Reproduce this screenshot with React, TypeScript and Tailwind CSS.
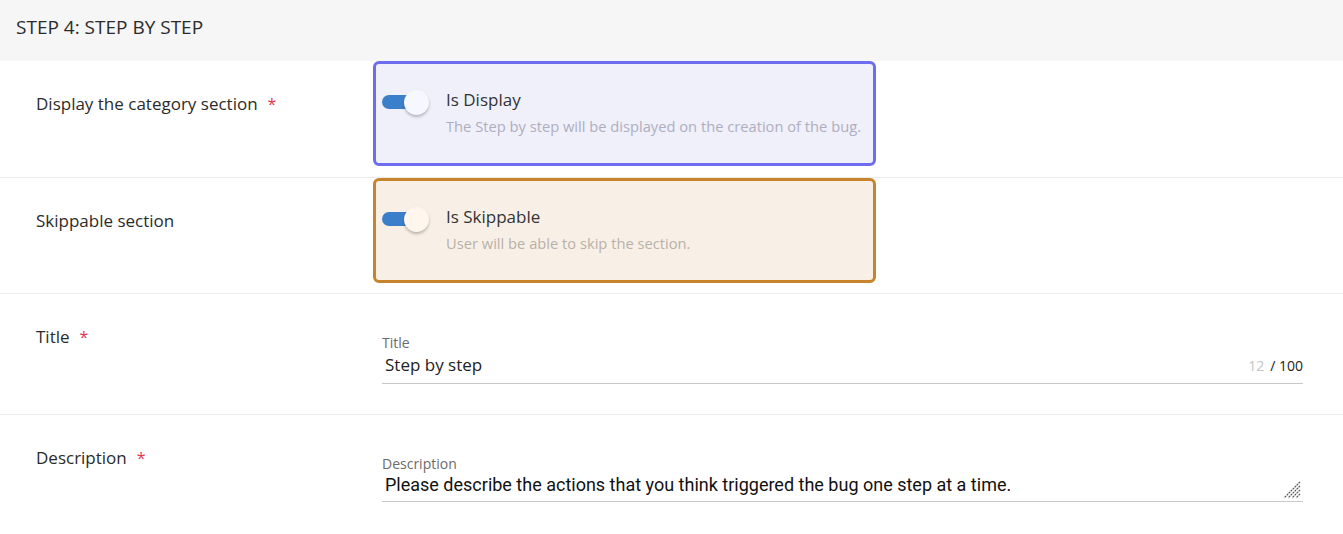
import React from "react";

const font = { fontFamily: '"Open Sans", "Noto Sans", sans-serif' };

const Required = () => <span className="ml-[10px] text-[16px] text-[#e2374f]">*</span>;

const Row = ({
  label,
  required,
  children,
  className = "",
}: {
  label: string;
  required?: boolean;
  children: React.ReactNode;
  className?: string;
}) => (
  <div className={`flex border-b border-[#ececec] ${className}`}>
    <div className="w-[373px] shrink-0 pl-9 pt-[32px] text-[17px] leading-[22px] text-[#2b2b2b]">
      {label}
      {required && <Required />}
    </div>
    <div className="flex-1 pr-10">{children}</div>
  </div>
);

// switch card with coloured border
const ToggleCard = ({
  title,
  hint,
  border,
  bg,
  hintColor,
}: {
  title: string;
  hint: string;
  border: string;
  bg: string;
  hintColor: string;
}) => (
  <div className={`flex h-[105px] w-[503px] rounded-[6px] border-[3px] pl-[6px] pt-[24px] ${border} ${bg}`}>
    <div className="relative mt-[5px] h-[24px] w-[48px] shrink-0">
      <div className="absolute left-0 top-[2px] h-[14px] w-[36px] rounded-full bg-[#3b7fcb]" />
      <div className={`absolute left-[22px] top-[-3px] h-[25px] w-[25px] rounded-full shadow-[0_2px_3px_rgba(0,0,0,0.25)] ${bg} brightness-[1.03]`} />
    </div>
    <div className="ml-[16px]">
      <div className="text-[17px] leading-[24px] text-[#333]">{title}</div>
      <div className={`mt-[4px] text-[14.7px] leading-[20px] ${hintColor}`}>{hint}</div>
    </div>
  </div>
);

export default function App() {
  return (
    <div className="min-h-[534px] w-[1343px] bg-white" style={font}>
      <div className="flex h-[61px] items-center bg-[#f6f6f6] px-4 pb-[6px] text-[19px] text-[#2b2b2b]">
        STEP 4: STEP BY STEP
      </div>

      <Row label="Display the category section" required className="pb-[11px]">
        <ToggleCard
          title="Is Display"
          hint="The Step by step will be displayed on the creation of the bug."
          border="border-[#6e6df0]"
          bg="bg-[#f0f0fb]"
          hintColor="text-[#aeaebf]"
        />
      </Row>

      <Row label="Skippable section" className="pb-[10px]">
        <ToggleCard
          title="Is Skippable"
          hint="User will be able to skip the section."
          border="border-[#c8842c]"
          bg="bg-[#f8f0e7]"
          hintColor="text-[#b9b1a9]"
        />
      </Row>

      <Row label="Title" required className="h-[121px]">
        <div className="ml-[9px] mt-[40px]">
          <div className="text-[14px] leading-[17px] text-[#6b6b6b]">Title</div>
          <div className="flex items-center border-b border-[#c8c8c8] pb-[6px] pt-[2px]">
            <input
              className="flex-1 bg-transparent pl-[3px] text-[17px] leading-[24px] text-[#222] outline-none"
              style={font}
              defaultValue="Step by step"
            />
            <span className="text-[14px] text-[#c4c4c4]">12</span>
            <span className="ml-[6px] text-[14px] text-[#222]">/ 100</span>
          </div>
        </div>
      </Row>

      <div className="flex">
        <div className="w-[373px] shrink-0 pl-9 pt-[32px] text-[17px] leading-[22px] text-[#2b2b2b]">
          Description
          <Required />
        </div>
        <div className="flex-1 pr-10">
          <div className="ml-[9px] mt-[40px]">
            <div className="text-[14px] leading-[17px] text-[#6b6b6b]">Description</div>
            <div className="relative">
              <textarea
                className="block h-[30px] w-full resize-none border-b border-[#c8c8c8] bg-transparent pl-[3px] pt-[1px] text-[18px] leading-[24px] text-[#111] outline-none"
                style={{ fontFamily: '"Roboto", sans-serif' }}
                defaultValue="Please describe the actions that you think triggered the bug one step at a time."
              />
              <svg className="absolute bottom-[3px] right-[2px]" width="18" height="18" viewBox="0 0 18 18">
                <g stroke="#555" strokeWidth="1.2" strokeDasharray="2 0.8">
                  <line x1="17" y1="1" x2="1" y2="17" />
                  <line x1="17" y1="5" x2="5" y2="17" />
                  <line x1="17" y1="9" x2="9" y2="17" />
                  <line x1="17" y1="13" x2="13" y2="17" />
                </g>
              </svg>
            </div>
          </div>
        </div>
      </div>
    </div>
  );
}
